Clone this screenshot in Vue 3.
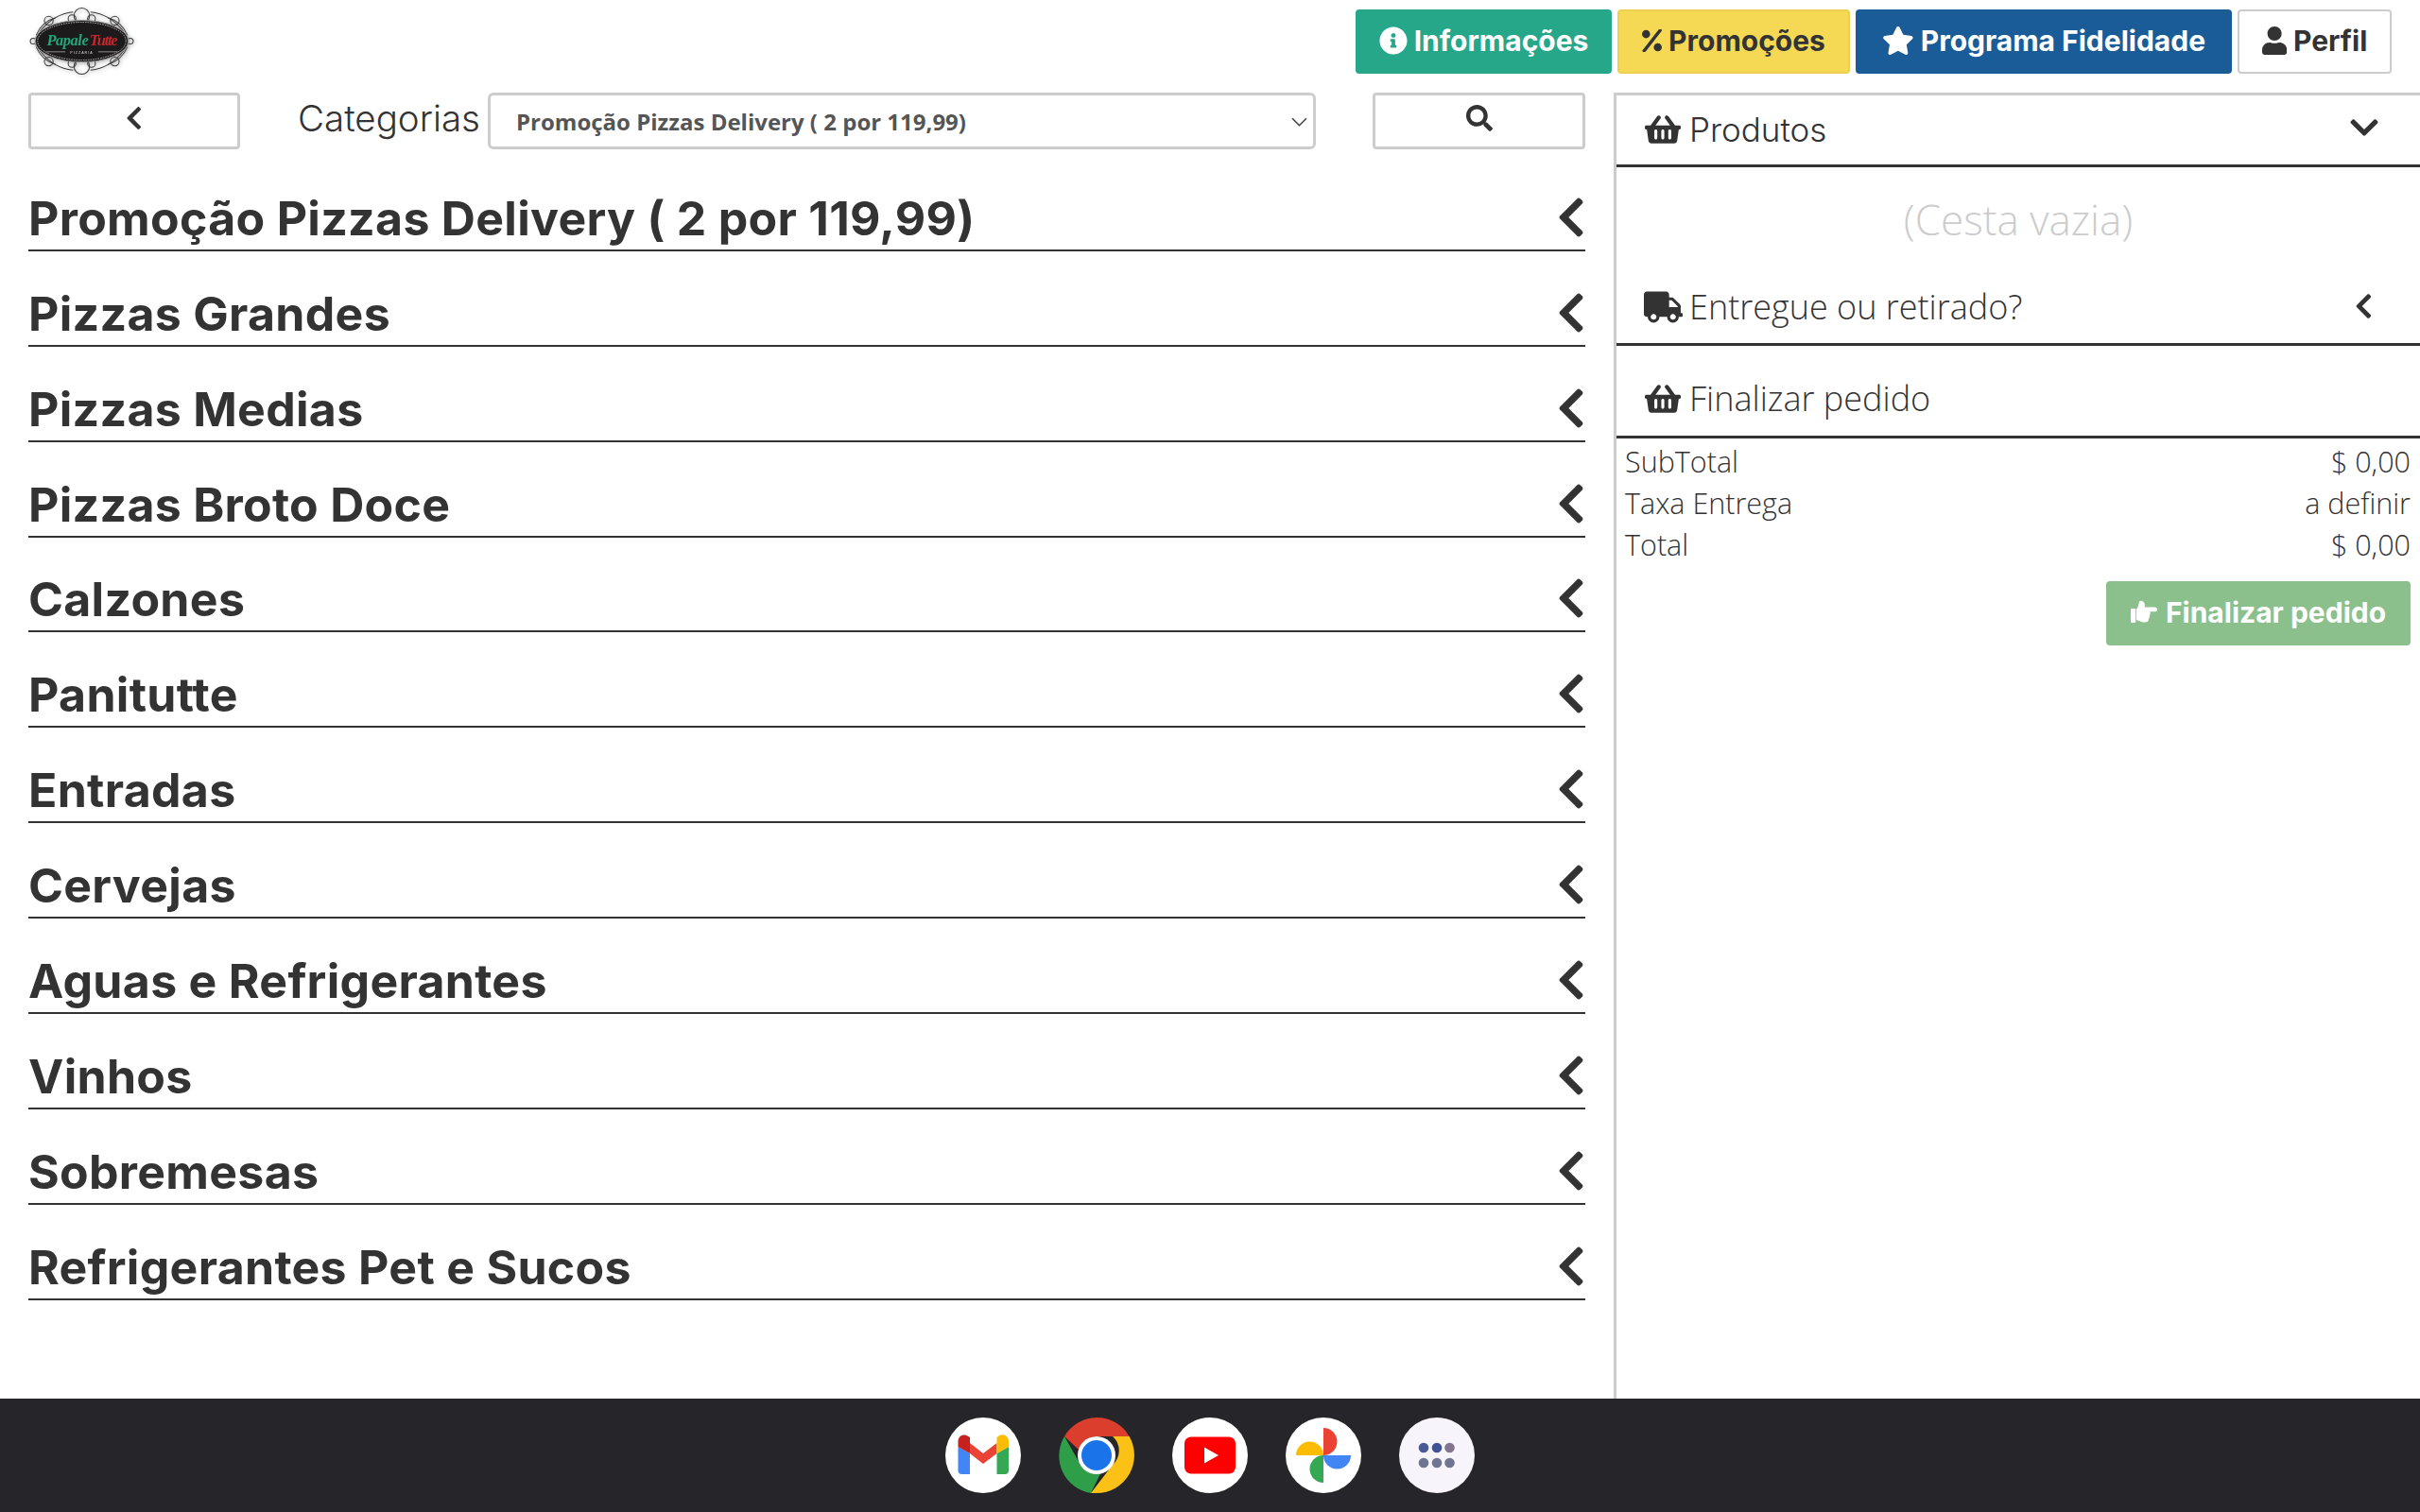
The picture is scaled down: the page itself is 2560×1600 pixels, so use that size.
<template>
  <div class="page">
    <!-- Top bar -->
    <header class="topbar">
      <svg class="logo" viewBox="0 0 110 72">
        <g fill="none" stroke="#3a3a3a" stroke-width="1">
          <circle cx="55" cy="10" r="8" />
          <circle cx="45" cy="13" r="4" />
          <circle cx="65" cy="13" r="4" />
          <circle cx="55" cy="62" r="8" />
          <circle cx="45" cy="59" r="4" />
          <circle cx="65" cy="59" r="4" />
          <circle cx="21" cy="15" r="4.500" />
          <circle cx="89" cy="15" r="4.500" />
          <circle cx="21" cy="57" r="4.500" />
          <circle cx="89" cy="57" r="4.500" />
          <circle cx="5" cy="36" r="3" />
          <circle cx="105" cy="36" r="3" />
          <path d="M12 26 Q26 8 46 6 M98 26 Q84 8 64 6 M12 46 Q26 64 46 66 M98 46 Q84 64 64 66" />
          <path d="M8 30 Q14 16 28 12 M102 30 Q96 16 82 12 M8 42 Q14 56 28 60 M102 42 Q96 56 82 60" />
        </g>
        <ellipse cx="55" cy="36" rx="48" ry="21.500" fill="#1d1a1b" stroke="#999" stroke-width="1" />
        <ellipse cx="55" cy="36" rx="45.500" ry="19.500" fill="none" stroke="#eee" stroke-width="0.7" stroke-dasharray="1.500 1" />
        <text x="19" y="40" class="logo-script" textLength="43" fill="#22a679">Papale</text>
        <text x="63" y="40" class="logo-script" textLength="29" fill="#c2282d">Tutte</text>
        <rect x="18" y="46.500" width="20" height="1" fill="#888" />
        <rect x="72" y="46.500" width="20" height="1" fill="#888" />
        <text x="55" y="49" class="logo-small" text-anchor="middle" fill="#ddd">PIZZARIA</text>
      </svg>

      <div class="top-actions">
        <button class="top-btn green">
          <svg viewBox="0 0 512 512"><path :d="icons.info" /></svg>Informações
        </button>
        <button class="top-btn yellow">
          <svg viewBox="0 0 448 512"><path :d="icons.percent" /></svg>Promoções
        </button>
        <button class="top-btn blue">
          <svg viewBox="0 0 576 512"><path :d="icons.star" /></svg>Programa Fidelidade
        </button>
        <button class="top-btn plain">
          <svg viewBox="0 0 448 512"><path :d="icons.user" /></svg>Perfil
        </button>
      </div>
    </header>

    <div class="content">
      <!-- Categories -->
      <main class="left">
        <div class="controls">
          <button class="box-btn back">
            <svg class="i-back" viewBox="0 0 320 512"><path :d="icons.left" /></svg>
          </button>
          <span class="cat-label">Categorias</span>
          <div class="select-wrap">
            <select class="cat-select">
              <option>{{ categories[0] }}</option>
            </select>
            <svg class="select-arrow" viewBox="0 0 16 9"><path d="M1 1l7 7 7-7" /></svg>
          </div>
          <button class="box-btn search">
            <svg class="i-search" viewBox="0 0 512 512"><path :d="icons.search" /></svg>
          </button>
        </div>

        <div class="cat-list">
          <div v-for="cat in categories" :key="cat" class="cat-row">
            <h2>{{ cat }}</h2>
            <svg viewBox="0 0 320 512"><path :d="icons.left" /></svg>
          </div>
        </div>
      </main>

      <!-- Basket -->
      <aside class="right">
        <div class="side-head first">
          <svg class="side-icon" viewBox="0 0 576 512"><path :d="icons.basket" /></svg>
          <span class="mont">Produtos</span>
          <svg class="i-down" viewBox="0 0 448 512"><path :d="icons.down" /></svg>
        </div>
        <div class="empty">(Cesta vazia)</div>
        <div class="side-head delivery">
          <svg class="side-icon truck" viewBox="0 0 640 512"><path :d="icons.truck" /></svg>
          <span>Entregue ou retirado?</span>
          <svg class="i-side-left" viewBox="0 0 320 512"><path :d="icons.left" /></svg>
        </div>
        <div class="side-head finish">
          <svg class="side-icon" viewBox="0 0 576 512"><path :d="icons.basket" /></svg>
          <span>Finalizar pedido</span>
        </div>
        <div class="totals">
          <div v-for="t in totals" :key="t.label" class="total-row">
            <span>{{ t.label }}</span>
            <span>{{ t.value }}</span>
          </div>
        </div>
        <div class="finish-wrap">
          <button class="finish-btn">
            <svg viewBox="0 0 512 512"><path :d="icons.hand" /></svg>Finalizar pedido
          </button>
        </div>
      </aside>
    </div>

    <!-- Android dock -->
    <footer class="dock">
      <svg viewBox="0 0 80 80">
        <circle cx="40" cy="40" r="40" fill="#fff" />
        <path d="M13.5 31v25a4 4 0 0 0 4 4H26V38z" fill="#4285f4" />
        <path d="M54.5 38v22H63a4 4 0 0 0 4-4V31z" fill="#34a853" />
        <path d="M26 27 40 38 54.5 27V38L40 49 26 38z" fill="#ea4335" />
        <path d="M13.5 31v-6c0-6 7-8.500 11-5L26 21v17z" fill="#c5221f" />
        <path d="M54.500 21l2-1.500c4-3 10.500-.5 10.500 5.500v6L54.500 38z" fill="#fbbc04" />
      </svg>
      <svg viewBox="0 0 80 80">
        <path d="M40 0a40 40 0 0 1 34.600 20H40a20 20 0 0 0-19 14L6 20A40 40 0 0 1 40 0z" fill="#dc3e2d" />
        <path d="M6 20 23 50a20 20 0 0 0 17 10 20 20 0 0 0 4-.5L34 80A40 40 0 0 1 6 20z" fill="#2f9e48" />
        <path d="M74.600 20A40 40 0 0 1 40 80h-6l23-30a20 20 0 0 0 0-30z" fill="#fbc116" />
        <circle cx="40" cy="40" r="20" fill="#fff" />
        <circle cx="40" cy="40" r="16" fill="#1a73e8" />
      </svg>
      <svg viewBox="0 0 80 80">
        <circle cx="40" cy="40" r="40" fill="#fff" />
        <rect x="13" y="20.500" width="54" height="39" rx="7" fill="#f00" />
        <path d="M34 31.500v17L49 40z" fill="#fff" />
      </svg>
      <svg viewBox="0 0 80 80">
        <circle cx="40" cy="40" r="40" fill="#fff" />
        <path d="M40 11a14.500 14.500 0 0 1 0 29z" fill="#ea4335" />
        <path d="M69 40a14.500 14.500 0 0 1-29 0z" fill="#4285f4" />
        <path d="M40 69a14.500 14.500 0 0 1 0-29z" fill="#34a853" />
        <path d="M11 40a14.500 14.500 0 0 1 29 0z" fill="#fbbc04" />
      </svg>
      <svg viewBox="0 0 80 80">
        <circle cx="40" cy="40" r="40" fill="#f7f5fb" />
        <circle cx="26" cy="32" r="5.300" fill="#4a5a96" />
        <circle cx="40" cy="32" r="5.300" fill="#3f5296" />
        <circle cx="53.500" cy="32" r="5.300" fill="#857490" />
        <circle cx="26" cy="48" r="5.300" fill="#6f7490" />
        <circle cx="40" cy="48" r="5.300" fill="#6f7490" />
        <circle cx="53.500" cy="48" r="5.300" fill="#6f7490" />
      </svg>
    </footer>
  </div>
</template>

<script setup>
const categories = [
  'Promoção Pizzas Delivery ( 2 por 119,99)',
  'Pizzas Grandes',
  'Pizzas Medias',
  'Pizzas Broto Doce',
  'Calzones',
  'Panitutte',
  'Entradas',
  'Cervejas',
  'Aguas e Refrigerantes',
  'Vinhos',
  'Sobremesas',
  'Refrigerantes Pet e Sucos'
]

const totals = [
  { label: 'SubTotal', value: '$ 0,00' },
  { label: 'Taxa Entrega', value: 'a definir' },
  { label: 'Total', value: '$ 0,00' }
]

// font awesome style glyphs
const icons = {
  left: 'M34.52 239.03L228.87 44.69c9.37-9.37 24.57-9.37 33.94 0l22.67 22.67c9.36 9.36 9.37 24.52.04 33.9L131.49 256l154.02 154.75c9.34 9.38 9.32 24.54-.04 33.9l-22.67 22.67c-9.37 9.37-24.57 9.37-33.94 0L34.52 272.97c-9.37-9.37-9.37-24.57 0-33.94z',
  down: 'M207.029 381.476L12.686 187.132c-9.373-9.373-9.373-24.569 0-33.941l22.667-22.667c9.357-9.357 24.522-9.375 33.901-.04L224 284.505l154.745-154.021c9.379-9.335 24.544-9.317 33.901.04l22.667 22.667c9.373 9.373 9.373 24.569 0 33.941L240.971 381.476c-9.373 9.372-24.569 9.372-33.942 0z',
  search: 'M505 442.7L405.3 343c-4.5-4.5-10.6-7-17-7H372c27.6-35.3 44-79.7 44-128C416 93.1 322.9 0 208 0S0 93.1 0 208s93.1 208 208 208c48.3 0 92.7-16.4 128-44v16.3c0 6.4 2.5 12.5 7 17l99.7 99.7c9.4 9.4 24.6 9.4 33.9 0l28.3-28.3c9.4-9.4 9.4-24.6.1-34zM208 336c-70.7 0-128-57.2-128-128 0-70.7 57.2-128 128-128 70.7 0 128 57.2 128 128 0 70.7-57.2 128-128 128z',
  info: 'M256 8C119.043 8 8 119.083 8 256c0 136.997 111.043 248 248 248s248-111.003 248-248C504 119.083 392.957 8 256 8zm0 110c23.196 0 42 18.804 42 42s-18.804 42-42 42-42-18.804-42-42 18.804-42 42-42zm56 254c0 6.627-5.373 12-12 12h-88c-6.627 0-12-5.373-12-12v-24c0-6.627 5.373-12 12-12h12v-64h-12c-6.627 0-12-5.373-12-12v-24c0-6.627 5.373-12 12-12h64c6.627 0 12 5.373 12 12v100h12c6.627 0 12 5.373 12 12v24z',
  percent: 'M92 200c50 0 92-42 92-92S142 16 92 16 0 58 0 108s42 92 92 92zm264 112c-50 0-92 42-92 92s42 92 92 92 92-42 92-92-42-92-92-92zM372 11c4.500-6.800 12.100-10.800 20.300-10.800l31.600.1c19.400.1 30.900 21.800 20 37.900L83.300 500.500c-4.500 6.800-12.100 10.800-20.300 10.800l-32.300-.1C11.300 511.100-.2 489.400 10.700 473.300z',
  star: 'M259.3 17.800L194 150.200 47.900 171.500c-26.200 3.800-36.700 36.100-17.700 54.600l105.700 103-25 145.500c-4.500 26.300 23.200 46 46.400 33.700L288 439.600l130.700 68.700c23.200 12.200 50.900-7.400 46.400-33.700l-25-145.500 105.700-103c19-18.500 8.500-50.800-17.700-54.600L382 150.200 316.700 17.800c-11.700-23.600-45.600-23.900-57.400 0z',
  user: 'M224 256c70.700 0 128-57.300 128-128S294.700 0 224 0 96 57.300 96 128s57.300 128 128 128zm89.600 32h-16.700c-22.200 10.200-46.900 16-72.900 16s-50.600-5.800-72.900-16h-16.700C60.200 288 0 348.200 0 422.400V464c0 26.500 21.500 48 48 48h352c26.500 0 48-21.500 48-48v-41.600c0-74.200-60.200-134.400-134.400-134.400z',
  basket: 'M576 216v16c0 13.255-10.745 24-24 24h-8l-26.113 182.788C514.509 462.435 494.257 480 470.370 480H105.630c-23.887 0-44.139-17.565-47.518-41.212L32 256h-8c-13.255 0-24-10.745-24-24v-16c0-13.255 10.745-24 24-24h67.341l106.780-146.821c10.395-14.292 30.407-17.453 44.701-7.058 14.293 10.395 17.453 30.408 7.058 44.701L170.477 192h235.046L326.120 82.821c-10.395-14.292-7.234-34.306 7.059-44.701 14.291-10.395 34.306-7.235 44.701 7.058L484.659 192H552c13.255 0 24 10.745 24 24zM312 392V280c0-13.255-10.745-24-24-24s-24 10.745-24 24v112c0 13.255 10.745 24 24 24s24-10.745 24-24zm112 0V280c0-13.255-10.745-24-24-24s-24 10.745-24 24v112c0 13.255 10.745 24 24 24s24-10.745 24-24zm-224 0V280c0-13.255-10.745-24-24-24s-24 10.745-24 24v112c0 13.255 10.745 24 24 24s24-10.745 24-24z',
  truck: 'M624 352h-16V243.900c0-12.700-5.100-24.900-14.100-33.900L494 110.100c-9-9-21.200-14.100-33.900-14.100H416V48c0-26.500-21.500-48-48-48H48C21.500 0 0 21.500 0 48v320c0 26.500 21.500 48 48 48h16c0 53 43 96 96 96s96-43 96-96h128c0 53 43 96 96 96s96-43 96-96h48c8.800 0 16-7.200 16-16v-32c0-8.800-7.200-16-16-16zM160 464c-26.500 0-48-21.500-48-48s21.500-48 48-48 48 21.500 48 48-21.500 48-48 48zm320 0c-26.500 0-48-21.500-48-48s21.500-48 48-48 48 21.500 48 48-21.500 48-48 48zm80-208H416V144h44.100l99.900 99.900V256z',
  hand: 'M512 199.652c0 23.625-20.650 43.826-44.650 43.826h-99.851c16.340 17.048 18.346 49.766-6.299 70.944 14.288 22.829 2.147 53.017-16.450 62.315C353.574 425.878 322.654 448 272 448c-2.746 0-13.276-.019-16-.016-61.971.049-76.035-31.090-123.200-38.328C119.634 407.610 110 396.280 110 383.168V199.652c0-8.776 4.462-16.851 11.764-21.559C135.248 169.409 160 94.916 160 64c0-17.673 14.327-32 32-32 26.310 0 80 22 80 80 0 24-5.400 37.400-8.650 43.826h204C491.350 155.826 512 176.027 512 199.652zM80 184H16c-8.837 0-16 7.163-16 16v240c0 8.837 7.163 16 16 16h64c8.837 0 16-7.163 16-16V200c0-8.837-7.163-16-16-16z'
}
</script>

<style>
html,
body {
  margin: 0;
  background: #fff;
}
</style>

<style scoped>
.page {
  width: 2560px;
  height: 1600px;
  display: flex;
  flex-direction: column;
  overflow: hidden;
  font-family: "Open Sans", sans-serif;
  color: #333;
}

.topbar {
  height: 98px;
  flex: none;
  display: flex;
  justify-content: space-between;
  padding: 6px 30px 0 30px;
  box-sizing: border-box;
}

.logo {
  width: 113px;
  height: 75px;
  filter: drop-shadow(1px 1px 2px rgba(0, 0, 0, 0.35));
}

.logo-script {
  font-family: "Liberation Serif", serif;
  font-style: italic;
  font-weight: 700;
  font-size: 16px;
}

.logo-small {
  font-family: "Liberation Sans", sans-serif;
  font-size: 3.500px;
  letter-spacing: 1px;
}

.top-actions {
  display: flex;
  gap: 6px;
  margin-top: 4px;
  height: 68px;
}

.top-btn {
  display: flex;
  align-items: center;
  justify-content: center;
  gap: 7px;
  height: 68px;
  box-sizing: border-box;
  border-radius: 4px;
  border: 2px solid transparent;
  font-family: Inter, sans-serif;
  font-weight: 700;
  font-size: 30px;
  padding: 0 0 3px;
}

.top-btn svg {
  height: 30px;
  fill: currentColor;
}

.top-btn.green {
  width: 271px;
  background: #26a78a;
  color: #fff;
}

.top-btn.yellow {
  width: 246px;
  background: #f5d955;
  border-color: #ecd050;
  color: #333;
}

.top-btn.yellow svg {
  height: 24px;
}

.top-btn.blue {
  width: 398px;
  background: #1a5c97;
  color: #fff;
}

.top-btn.plain {
  width: 163px;
  background: #fff;
  border-color: #ccc;
  color: #333;
}

.content {
  flex: 1;
  display: flex;
  min-height: 0;
}

.left {
  width: 1707px;
  flex: none;
  box-sizing: border-box;
  padding: 0 30px;
}

.controls {
  display: flex;
  align-items: stretch;
  height: 60px;
}

.box-btn {
  background: #fff;
  border: 3px solid #ccc;
  border-radius: 4px;
  padding: 0;
  box-sizing: border-box;
  display: flex;
  justify-content: center;
}

.back {
  width: 224px;
  margin-right: 61px;
}

.i-back {
  height: 28px;
  margin-top: 10px;
  fill: #333;
}

.search {
  width: 225px;
  margin-left: 60px;
}

.i-search {
  height: 28px;
  margin-top: 10px;
  fill: #333;
}

.cat-label {
  width: 201px;
  flex: none;
  font-family: Inter, sans-serif;
  font-weight: 300;
  font-size: 38.500px;
  line-height: 54px;
  color: #333;
}

.select-wrap {
  position: relative;
  width: 876px;
  flex: none;
}

.cat-select {
  width: 100%;
  height: 100%;
  box-sizing: border-box;
  appearance: none;
  background: #fff;
  border: 3px solid #ccc;
  border-radius: 6px;
  padding: 0 27px;
  font-family: "Open Sans", sans-serif;
  font-weight: 700;
  font-size: 24px;
  color: #555;
}

.select-arrow {
  position: absolute;
  right: 9px;
  top: 26px;
  width: 17px;
  height: 10px;
  fill: none;
  stroke: #444;
  stroke-width: 1.500;
}

.cat-list {
  margin-top: 7px;
}

.cat-row {
  height: 100.900px;
  box-sizing: border-box;
  border-bottom: 2px solid #333;
  display: flex;
  justify-content: space-between;
  align-items: flex-end;
}

.cat-row h2 {
  margin: 0 0 3px;
  font-family: Inter, sans-serif;
  font-weight: 700;
  font-size: 50px;
  line-height: 60px;
  color: #333;
  letter-spacing: 0.300px;
}

.cat-row svg {
  height: 48px;
  margin: 0 0 10px;
  fill: #333;
  flex: none;
}

.right {
  flex: 1;
  border-left: 3px solid #ccc;
  border-top: 3px solid #ccc;
  box-sizing: border-box;
}

.side-head {
  display: flex;
  align-items: center;
  padding: 0 0 0 30px;
  font-size: 36px;
  font-weight: 300;
  color: #333;
  border-bottom: 3px solid #333;
  box-sizing: border-box;
  position: relative;
}

.side-head span {
  margin-left: 9px;
}

.side-head .mont {
  font-family: Inter, sans-serif;
  font-size: 35px;
}

.side-icon {
  width: 38px;
  height: 34px;
  fill: #333;
  flex: none;
}

.side-icon.truck {
  width: 41px;
  margin-left: -1px;
  margin-right: -2px;
}

.side-head.first {
  height: 76px;
  padding-bottom: 2px;
}

.i-down {
  position: absolute;
  right: 44px;
  top: 17px;
  width: 30px;
  height: 34px;
  fill: #333;
}

.empty {
  height: 92px;
  line-height: 110px;
  text-align: center;
  font-size: 44px;
  font-weight: 300;
  color: #ccc;
}

.side-head.delivery {
  height: 97px;
  padding-top: 17px;
}

.i-side-left {
  position: absolute;
  right: 50px;
  top: 40px;
  height: 30px;
  fill: #333;
}

.side-head.finish {
  height: 98px;
  padding-top: 16px;
}

.totals {
  padding: 2px 10px 0 9px;
}

.total-row {
  display: flex;
  justify-content: space-between;
  height: 44px;
  line-height: 44px;
  font-size: 30.500px;
  font-weight: 300;
  color: #333;
}

.finish-wrap {
  display: flex;
  justify-content: flex-end;
  padding: 17px 10px 0 0;
}

.finish-btn {
  width: 322px;
  height: 68px;
  border: none;
  border-radius: 4px;
  background: #8bc08d;
  color: #fff;
  font-family: Inter, sans-serif;
  font-weight: 700;
  font-size: 30px;
  display: flex;
  align-items: center;
  justify-content: center;
  gap: 9px;
  padding: 0 0 3px;
}

.finish-btn svg {
  height: 28px;
  fill: #fff;
}

.dock {
  height: 120px;
  flex: none;
  background: #25252a;
  display: flex;
  align-items: center;
  justify-content: center;
  gap: 40px;
}

.dock svg {
  width: 80px;
  height: 80px;
}
</style>
